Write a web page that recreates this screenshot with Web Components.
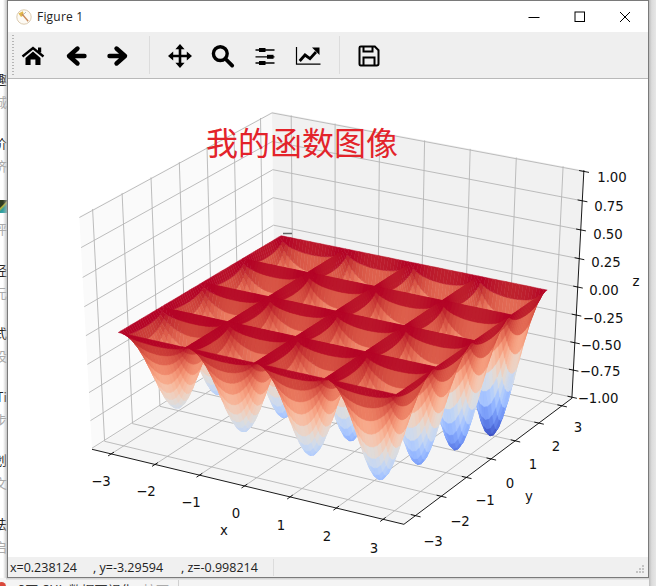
<!DOCTYPE html>
<html><head><meta charset="utf-8">
<style>
html,body{margin:0;padding:0;width:656px;height:586px;overflow:hidden;background:#fff}
body{font-family:"Noto Sans","Noto Sans CJK SC",sans-serif}
</style></head><body>
<desk-top>
  <fig-window title-text="Figure 1"></fig-window>
</desk-top>
<script>
const CM=[[59,76,192],[68,90,204],[77,104,215],[87,117,225],[98,130,234],[108,142,241],[119,154,247],[130,165,251],[141,176,254],[152,185,255],[163,194,255],[174,201,253],[184,208,249],[194,213,244],[204,217,238],[213,219,230],[221,221,221],[229,216,209],[236,211,197],[241,204,185],[245,196,173],[247,187,160],[247,177,148],[247,166,135],[244,154,123],[241,141,111],[236,127,99],[229,112,88],[222,96,77],[213,80,66],[203,62,56],[192,40,47],[180,4,38]];
function cool(t){t=Math.max(0,Math.min(1,t))*32;const i=Math.min(31,Math.floor(t)),f=t-i,a=CM[i],b=CM[i+1];return `rgb(${[0,1,2].map(k=>Math.round(a[k]+(b[k]-a[k])*f)).join(',')})`}
function proj(x,y,z){const L=6.88,Z=2.02;const a=x/L,b=y/L,c=z/Z;
  const xv=.866*a+.5*b,yv=-.25*a+.433*b+.866*c,n=.433*a-.75*b+.5*c,f=10/(10-n);
  return [335.7+360*xv*f,311-266*yv*f,n]}
const f1=v=>v.toFixed(1);
function line3(p,q,attrs){const A=proj(...p),B=proj(...q);return `<line x1="${f1(A[0])}" y1="${f1(A[1])}" x2="${f1(B[0])}" y2="${f1(B[1])}" ${attrs}/>`}
function poly3(pts,fill){return `<polygon points="${pts.map(p=>{const q=proj(...p);return f1(q[0])+','+f1(q[1])}).join(' ')}" fill="${fill}"/>`}
function zfn(x,y){const d=1+.048*x+.077*y;const w=2*Math.PI/3,p=1.28,k=.6;
  const a=Math.abs(Math.sin(w*x))+1e-5,b=Math.abs(Math.sin(w*y))+1e-5;
  const h=Math.pow(Math.pow(a,-k)+Math.pow(b,-k)-1,-1/k);
  return -d*Math.pow(h,p)}

class DeskTop extends HTMLElement{constructor(){super();const s=this.attachShadow({mode:'open'});
  const rows=[['趣','城'],['价','济'],['','评'],['经','元'],['式','设'],['Ti','步'],['划','文'],['法','启']];
  s.innerHTML=`<style>
  :host{display:block;width:656px;height:586px;position:relative;overflow:hidden;background:#fff;font:13px "Noto Sans CJK SC",sans-serif}
  .list{width:7px;display:flex;flex-direction:column;padding-top:70px;overflow:hidden}
  .it{height:63.5px;display:flex;flex-direction:column;align-items:flex-end;gap:6px}
  .a{color:#222;line-height:17px;height:17px}.b{color:#aaa;line-height:17px;height:17px}
  .img{position:absolute;left:0;top:200px;width:7px;height:13px;background:linear-gradient(135deg,#2d3a20 0 35%,#b7b23a 45%,#2f9c9c 60%,#49b3b3)}
  .shade{position:absolute;left:3px;top:0;width:5px;height:578px;background:linear-gradient(90deg,rgba(190,190,190,0),rgba(175,175,175,.9))}
  .right{position:absolute;left:649px;top:0;width:7px;height:586px;background:linear-gradient(90deg,#bcbcbc,#dcdcdc 40%,#e6e6e6)}
  .bot{position:absolute;left:0;top:578px;width:656px;height:8px;background:#f4f4f4;color:#333;font-size:13px;overflow:hidden;white-space:nowrap}
  .bot i{font-style:normal;position:absolute;top:4px;line-height:15px}
  .bot .g{color:#aaa}
  .bot u{position:absolute;left:178px;top:0;width:1px;height:8px;background:#d0d0d0}
  .dot{position:absolute;left:-3px;top:4px;width:9px;height:9px;border-radius:50%;background:#d9483b}
  .sh{position:absolute;left:6px;top:577px;width:650px;height:3px;background:linear-gradient(180deg,#bdbdbd,#ececec)}
  ::slotted(*){position:absolute;left:7px;top:0}
  </style>
  <div class="list">${rows.map(r=>`<div class="it"><div class="a">${r[0]}</div><div class="b">${r[1]}</div></div>`).join('')}</div>
  <div class="img"></div>
  <div class="bot"><span class="dot"></span><i style="left:18px">3页 CUL 数据可视化</i><i class="g" style="left:143px">按下</i><u></u></div>
  <div class="shade"></div><div class="sh"></div><div class="right"></div>
  <slot></slot>`}}
customElements.define('desk-top',DeskTop);

class FigWindow extends HTMLElement{constructor(){super();const s=this.attachShadow({mode:'open'});
  s.innerHTML=`<style>
  :host{display:flex;flex-direction:column;width:642px;height:578px;box-sizing:border-box;border:1px solid #7a7a7a;background:#fff}
  </style>
  <win-title>${this.getAttribute('title-text')||''}</win-title>
  <fig-toolbar></fig-toolbar>
  <plot-canvas></plot-canvas>
  <status-bar></status-bar>`}}
class WinTitle extends HTMLElement{constructor(){super();const s=this.attachShadow({mode:'open'});
  s.innerHTML=`<style>
  :host{display:flex;align-items:center;height:31px;flex:none;background:#fff;font:12px "Open Sans","Noto Sans",sans-serif;color:#222}
  .ico{margin-left:8px;margin-right:5px;flex:none}
  .t{flex:1;letter-spacing:.2px}
  .b{width:45.5px;height:31px;display:flex;align-items:center;justify-content:center;flex:none}
  .ctl{display:flex}
  </style>
  <svg class="ico" width="16" height="16" viewBox="0 0 16 16"><circle cx="8" cy="8" r="7.2" fill="#fdfaf4" stroke="#dccbb0" stroke-width="1"/><path d="M2.5 4.5 L6.8 2.2 L8 6 L5 8Z" fill="#e0b64a"/><path d="M6 5 L12.2 12.2" stroke="#c98a5a" stroke-width="1.4"/><path d="M7.5 5.5 L10 3" stroke="#b5babd" stroke-width="1"/></svg>
  <div class="t"><slot></slot></div>
  <div class="ctl">
  <div class="b"><svg width="12" height="12" viewBox="0 0 12 12"><path d="M.5 6.5H11.5" stroke="#000" stroke-width="1"/></svg></div>
  <div class="b"><svg width="12" height="12" viewBox="0 0 12 12"><rect x="1" y="1" width="9.5" height="9.5" fill="none" stroke="#000" stroke-width="1"/></svg></div>
  <div class="b"><svg width="12" height="12" viewBox="0 0 12 12"><path d="M1 1L11 11M11 1L1 11" stroke="#000" stroke-width="1"/></svg></div>
  </div>`}}
class ToolIcon extends HTMLElement{static paths={
  home:`<path d="M-10.5 0.5L0 -8L10.5 0.5" fill="none" stroke="#000" stroke-width="2.4" stroke-linejoin="miter"/><rect x="5" y="-8.5" width="3.2" height="5"/><path d="M-7.5 2L0 -4.6L7.5 2V9H2.4V3.6H-2.4V9H-7.5Z"/>`,
  back:`<path d="M1.5 -7.5L-7 0L1.5 7.5M-7 0H8.5" fill="none" stroke="#000" stroke-width="4.4" stroke-linejoin="round" stroke-linecap="round"/>`,
  fwd:`<path d="M-1.5 -7.5L7 0L-1.5 7.5M7 0H-8.5" fill="none" stroke="#000" stroke-width="4.4" stroke-linejoin="round" stroke-linecap="round"/>`,
  move:`<path d="M0 -8V8M-8 0H8" stroke="#000" stroke-width="2.6"/><path d="M0 -12L-4.6 -6.8H4.6ZM0 12L-4.6 6.8H4.6ZM-12 0L-6.8 -4.6V4.6ZM12 0L6.8 -4.6V4.6Z"/>`,
  zoom:`<circle cx="-2.7" cy="-2.4" r="6.9" fill="none" stroke="#000" stroke-width="3.4"/><path d="M2.6 3L9.2 9.6" stroke="#000" stroke-width="3.8" stroke-linecap="round"/>`,
  tune:`<path d="M-9.5 -6H9.5M-9.5 .8H9.5M-9.5 7H9.5" stroke="#000" stroke-width="1.3"/><rect x="-6" y="-8" width="6.5" height="4"/><rect x="2" y="-1.2" width="6.5" height="4"/><rect x="-6" y="5" width="6.5" height="4"/>`,
  chart:`<path d="M-11.5 -9V8.2H12.5" fill="none" stroke="#000" stroke-width="1.2"/><path d="M-8.3 5L-3 -1L2 2.6L8 -4" fill="none" stroke="#000" stroke-width="2.8"/><path d="M4 -8.5H11.5V-1Z"/>`,
  save:`<path d="M-8.2 -9.5H5.8L9.5 -5.8V7.8Q9.5 9.5 7.8 9.5H-8.2Q-9.5 9.5 -9.5 7.8V-8.2Q-9.5 -9.5 -8.2 -9.5Z" fill="none" stroke="#000" stroke-width="2"/><path d="M-5.5 -9.5V-4.5H3.5V-9.5M-5.5 9.5V1.5H5.5V9.5" fill="none" stroke="#000" stroke-width="2"/>`};
  constructor(){super();const s=this.attachShadow({mode:'open'});
  s.innerHTML=`<style>:host{display:flex;width:42.5px;height:46px;align-items:center;justify-content:center;flex:none}</style>
  <svg width="26" height="26" viewBox="-13 -13 26 26">${ToolIcon.paths[this.getAttribute('name')]||''}</svg>`}}
class FigToolbar extends HTMLElement{constructor(){super();const s=this.attachShadow({mode:'open'});
  const ic=n=>`<tool-icon name="${n}"></tool-icon>`;
  s.innerHTML=`<style>
  :host{display:flex;flex:none;background:#efefef;border-bottom:1px solid #b9b9b9;padding-left:4px;position:relative;align-items:flex-start;padding-top:1px;height:45px}
  .grip{position:absolute;left:4px;top:3px;width:2px;height:41px;background:repeating-linear-gradient(180deg,#b5b5b5 0 1px,transparent 1px 3px)}
  .sep{width:1px;height:38px;background:#dcdcdc;flex:none}
  .s1{margin:3px 9px 0 9.5px}.s2{margin:3px 8px 0 10px}
  </style><div class="grip"></div>
  ${ic('home')}${ic('back')}${ic('fwd')}<div class="sep s1"></div>${ic('move')}${ic('zoom')}${ic('tune')}${ic('chart')}<div class="sep s2"></div>${ic('save')}`}}
class StatusBar extends HTMLElement{constructor(){super();const s=this.attachShadow({mode:'open'});
  s.innerHTML=`<style>
  :host{display:flex;height:20px;flex:none;background:#f0f0f0;font:12.5px "Open Sans","Noto Sans",sans-serif;color:#222;align-items:center;padding-left:2px;white-space:pre;position:relative}
  .m{width:263px;flex:none;display:flex}
  .m span:nth-child(1){width:83px}.m span:nth-child(2){width:88px}
  .sep{width:1px;height:17px;background:#dcdcdc}
  .grip{position:absolute;right:3px;bottom:3px}
  </style><div class="m"><span>x=0.238124</span><span>, y=-3.29594</span><span>, z=-0.998214</span></div><div class="sep"></div>
  <svg class="grip" width="10" height="10" viewBox="0 0 10 10" fill="#c4c4c4"><rect x="7" y="1" width="2" height="2"/><rect x="4" y="4" width="2" height="2"/><rect x="7" y="4" width="2" height="2"/><rect x="1" y="7" width="2" height="2"/><rect x="4" y="7" width="2" height="2"/><rect x="7" y="7" width="2" height="2"/></svg>`}}
class PlotCanvas extends HTMLElement{constructor(){super();const s=this.attachShadow({mode:'open'});
  const t=[-3,-2,-1,0,1,2,3],zt=[-1,-.75,-.5,-.25,0,.25,.5,.75,1];
  const P=.5*6.88,Q=.5*2.02;
  let o='';
  o+=poly3([[-P,-P,-Q],[-P,P,-Q],[-P,P,Q],[-P,-P,Q]],'#fafafa');
  o+=poly3([[-P,P,-Q],[P,P,-Q],[P,P,Q],[-P,P,Q]],'#f1f1f1');
  o+=poly3([[-P,-P,-Q],[P,-P,-Q],[P,P,-Q],[-P,P,-Q]],'#f5f5f5');
  const G='stroke="#b5b5b5" stroke-width=".9"';
  for(const v of t){o+=line3([v,-P,-Q],[v,P,-Q],G)+line3([v,P,-Q],[v,P,Q],G);
    o+=line3([P,v,-Q],[-P,v,-Q],G)+line3([-P,v,-Q],[-P,v,Q],G);}
  for(const v of zt){o+=line3([-P,-P,v],[-P,P,v],G)+line3([-P,P,v],[P,P,v],G);}
  const K='stroke="#000" stroke-width=".9"';
  o+=line3([-P,-P,-Q],[P,-P,-Q],K)+line3([P,-P,-Q],[P,P,-Q],K)+line3([P,P,-Q],[P,P,Q],K);
  const tx=.11,ty=.11;
  for(const v of t){o+=line3([v,-P-ty,-Q],[v,-P+ty*.9,-Q],K);o+=line3([P-tx*.9,v,-Q],[P+tx,v,-Q],K);}
  for(const v of zt){o+=line3([P-tx*.9,P,v],[P+tx,P,v],K);}
  const N=80,h=6/N,faces=[];
  for(let i=0;i<N;i++)for(let j=0;j<N;j++){
    const x=-3+i*h,y=-3+j*h;
    const pts=[[x,y],[x+h,y],[x+h,y+h],[x,y+h]].map(p=>[p[0],p[1],zfn(p[0],p[1])]);
    const mz=(pts[0][2]+pts[1][2]+pts[2][2]+pts[3][2])/4;
    const pr=pts.map(p=>proj(...p));
    const d=(pr[0][2]+pr[1][2]+pr[2][2]+pr[3][2])/4;
    faces.push({d,mz,pr});}
  faces.sort((a,b)=>a.d-b.d);
  let surf='';
  for(const F of faces){const c=cool((F.mz+1.27)/1.24);
    surf+=`<path d="M${F.pr.map(q=>f1(q[0])+' '+f1(q[1])).join('L')}Z" fill="${c}" stroke="${c}" stroke-width=".5"/>`}
  o+=surf;
  o+=`<path d="M283 233.5H292" fill="none" stroke="#666" stroke-width="1.5"/>`;
  const T='font-family="DejaVu Sans" font-size="13.3" fill="#111" text-anchor="middle" dominant-baseline="central"';
  const lab=(x,y,tx)=>`<text x="${x}" y="${y}" ${T}>${tx}</text>`;
  [['−3',101,481],['−2',146,491],['−1',191,502],['0',236,513],['1',281,525],['2',327,536],['3',374,548],['x',224,530],
   ['−3',433,541],['−2',460,521],['−1',485,500],['0',510,483],['1',533,464],['2',556,446],['3',578,427],['y',529,496],
   ['1.00',612,177],['0.75',609,206],['0.50',608,234],['0.25',606,262],['0.00',604,290],['−0.25',603,318],['−0.50',601,345],['−0.75',600,371],['−1.00',598,398],['z',636,281]]
   .forEach(a=>o+=lab(a[1],a[2],a[0]));
  o+=`<text x="302" y="141" font-family="Noto Sans CJK SC" font-size="32" fill="#e3232a" text-anchor="middle" dominant-baseline="central">我的函数图像</text>`;
  s.innerHTML=`<style>:host{display:block;flex:1;min-height:0;background:#fff;overflow:hidden}svg{display:block}</style>
  <svg width="640" height="477" viewBox="8 79 640 477">${o}</svg>`}}
customElements.define('win-title',WinTitle);
customElements.define('tool-icon',ToolIcon);
customElements.define('fig-toolbar',FigToolbar);
customElements.define('status-bar',StatusBar);
customElements.define('plot-canvas',PlotCanvas);
customElements.define('fig-window',FigWindow);
</script>
</body></html>
